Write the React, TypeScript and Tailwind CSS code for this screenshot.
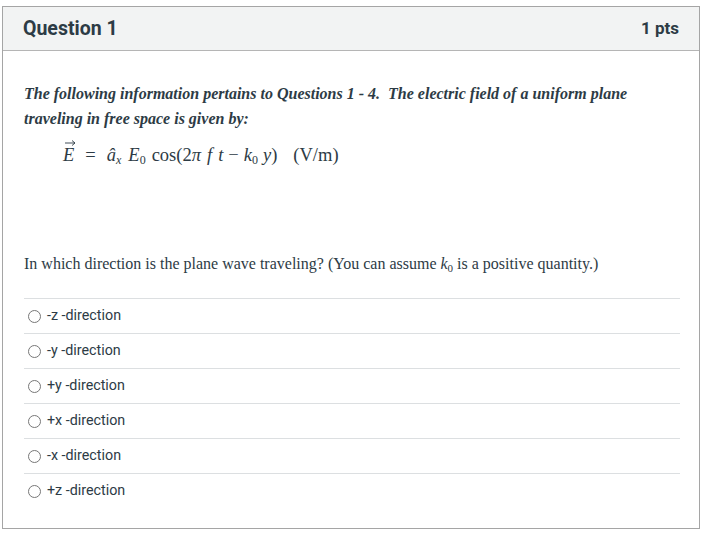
import React from "react";

const options = [
  "-z -direction",
  "-y -direction",
  "+y -direction",
  "+x -direction",
  "-x -direction",
  "+z -direction",
];

const serif = "font-['Liberation_Serif','Times_New_Roman',serif]";

const Equation: React.FC = () => {
  return (
    <div className={`${serif} text-[18.5px] leading-[24px] text-[#2d3b45] pl-[39px] flex items-baseline`}>
      <span className="relative italic">
        E
        <svg
          className="absolute left-[2px] -top-[3px]"
          width="11"
          height="6"
          viewBox="0 0 11 6"
        >
          <path d="M0 3 H10 M7 0.5 L10 3 L7 5.5" stroke="#2d3b45" strokeWidth="0.9" fill="none" />
        </svg>
      </span>
      <span className="mx-[11px]">=</span>
      <span className="italic">â</span>
      <sub className="italic text-[12px]">x</sub>
      <span className="italic ml-[7px]">E</span>
      <sub className="text-[12px]">0</sub>
      <span className="ml-[6px]">cos(2</span>
      <span className="italic">π</span>
      <span className="italic ml-[6px]">f</span>
      <span className="italic ml-[6px]">t</span>
      <span className="mx-[5px]">−</span>
      <span className="italic">k</span>
      <sub className="text-[12px]">0</sub>
      <span className="italic ml-[5px]">y</span>
      <span>)</span>
      <span className="ml-[16px]">(V/m)</span>
    </div>
  );
};

const App: React.FC = () => {
  return (
    <div className="w-[716px] h-[548px] bg-white pt-[6px] pl-[2px]">
      <div className="w-[698px] h-[523px] border border-[#a5a5a5] flex flex-col">
        <div className="h-[44px] bg-[#f2f3f3] border-b border-[#b5b5b5] flex items-center justify-between px-[20px] font-['Roboto',sans-serif] text-[#2d3b45]">
          <h2 className="text-[19.5px] font-bold">Question 1</h2>
          <span className="text-[17px] font-bold">1 pts</span>
        </div>

        <div className="px-[21px] pt-[30px]">
          <p className={`${serif} italic font-bold text-[16px] leading-[25px] text-[#2d3b45]`}>
            The following information pertains to Questions 1 - 4.&nbsp; The electric field of a uniform plane traveling in free space is given by:
          </p>
          <div className="mt-[12px]">
            <Equation />
          </div>

          <p className={`${serif} text-[16px] text-[#2d3b45] mt-[85px]`}>
            In which direction is the plane wave traveling? (You can assume <span className="italic">k</span>
            <sub className="text-[11px]">0</sub> is a positive quantity.)
          </p>

          <div className="mt-[22px] mr-[-2px]">
            {options.map((opt) => (
              <div key={opt} className="h-[35px] flex items-center border-t border-[#dcdfe1]">
                <span className="w-[13px] h-[13px] rounded-full border border-[#777] ml-[4px] mr-[6px]" />
                <span className="font-['Roboto',sans-serif] text-[14.3px] text-[#2d3b45]">{opt}</span>
              </div>
            ))}
          </div>
        </div>
      </div>
    </div>
  );
};

export default App;
